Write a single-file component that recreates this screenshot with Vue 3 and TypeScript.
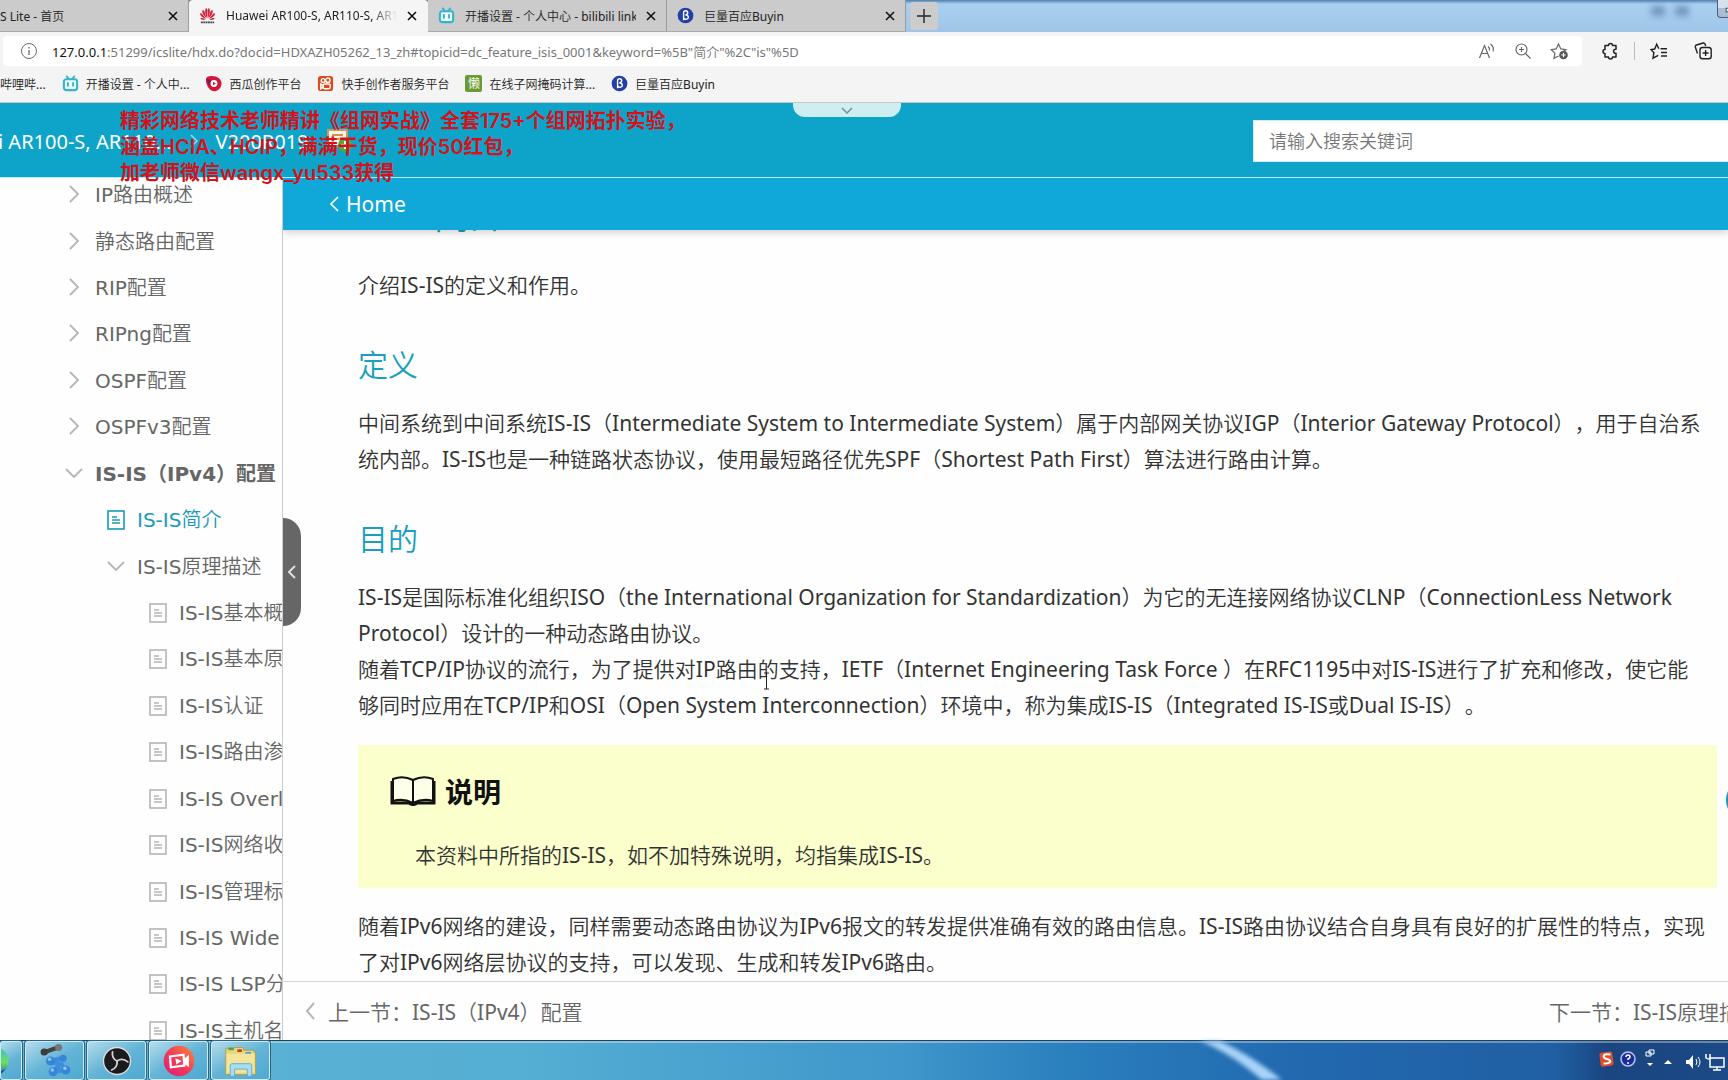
<script setup lang="ts">
interface TreeItem {
  label: string
  level: 1 | 2 | 3
  kind: 'closed' | 'open' | 'doc'
  bold?: boolean
  active?: boolean
}

interface Tab {
  title: string
  icon: string
  active?: boolean
}

const tabs: Tab[] = [
  { title: 'S Lite - 首页', icon: '' },
  { title: 'Huawei AR100-S, AR110-S, AR120-S', icon: 'huawei', active: true },
  { title: '开播设置 - 个人中心 - bilibili link', icon: 'bili' },
  { title: '巨量百应Buyin', icon: 'buyin' },
]

const bookmarks = [
  { title: '哔哩哔...', icon: '' },
  { title: '开播设置 - 个人中...', icon: 'bili' },
  { title: '西瓜创作平台', icon: 'xigua' },
  { title: '快手创作者服务平台', icon: 'kuaishou' },
  { title: '在线子网掩码计算...', icon: 'lan' },
  { title: '巨量百应Buyin', icon: 'buyin' },
]

const tree: TreeItem[] = [
  { label: 'IP路由概述', level: 1, kind: 'closed' },
  { label: '静态路由配置', level: 1, kind: 'closed' },
  { label: 'RIP配置', level: 1, kind: 'closed' },
  { label: 'RIPng配置', level: 1, kind: 'closed' },
  { label: 'OSPF配置', level: 1, kind: 'closed' },
  { label: 'OSPFv3配置', level: 1, kind: 'closed' },
  { label: 'IS-IS（IPv4）配置', level: 1, kind: 'open', bold: true },
  { label: 'IS-IS简介', level: 2, kind: 'doc', active: true },
  { label: 'IS-IS原理描述', level: 2, kind: 'open' },
  { label: 'IS-IS基本概念', level: 3, kind: 'doc' },
  { label: 'IS-IS基本原理', level: 3, kind: 'doc' },
  { label: 'IS-IS认证', level: 3, kind: 'doc' },
  { label: 'IS-IS路由渗透', level: 3, kind: 'doc' },
  { label: 'IS-IS Overload', level: 3, kind: 'doc' },
  { label: 'IS-IS网络收敛', level: 3, kind: 'doc' },
  { label: 'IS-IS管理标记', level: 3, kind: 'doc' },
  { label: 'IS-IS Wide Metric', level: 3, kind: 'doc' },
  { label: 'IS-IS LSP分片扩展', level: 3, kind: 'doc' },
  { label: 'IS-IS主机名映射', level: 3, kind: 'doc' },
]
</script>

<template>
  <div class="screen">
    <svg class="defs" aria-hidden="true">
      <symbol id="ic-huawei" viewBox="0 0 18 18">
        <g fill="#d3203c">
          <path d="M8.700 12C6.500 8 6 4 7 1.500c1.200-.4 1.800.5 1.800 2z" />
          <path d="M9.300 12c2.200-4 2.700-8 1.700-10.500-1.200-.4-1.800.5-1.800 2z" />
          <path d="M8 12C5 9.500 3.300 6.500 3.400 3.800c1-.8 2-.1 2.500 1.200z" />
          <path d="M10 12c3-2.500 4.700-5.500 4.600-8.200-1-.8-2-.1-2.500 1.200z" />
          <path d="M7.400 12.500C4 11.500 1.300 9.500.8 7.200c.6-.9 1.700-.7 2.500.2z" />
          <path d="M10.600 12.500c3.400-1 6.100-3 6.600-5.300-.6-.9-1.700-.7-2.500.2z" />
          <path d="M7 13.300c-2.300.7-4.500.4-5.600-1.300.7-.5 2.500-.2 5.600 1.300zM11 13.300c2.300.7 4.500.4 5.600-1.300-.7-.5-2.500-.2-5.600 1.300z" />
        </g>
        <path d="M2 16.300h14" stroke="#444" stroke-width="2" stroke-dasharray="2 .5" />
      </symbol>
      <symbol id="ic-bili" viewBox="0 0 18 18">
        <path d="M5 1.500l2 2.500M13 1.500L11 4" stroke="#35b4cc" stroke-width="2" stroke-linecap="round" />
        <rect x="2" y="4.500" width="14" height="11.500" rx="2.500" fill="#e9fbfd" stroke="#35b4cc" stroke-width="2.200" />
        <path d="M6.300 8.500v3M11.700 8.500v3" stroke="#35b4cc" stroke-width="2" stroke-linecap="round" />
      </symbol>
      <symbol id="ic-buyin" viewBox="0 0 18 18">
        <circle cx="9" cy="9" r="8.300" fill="#243ea8" />
        <path d="M7 14V5.500C7 3.500 11.300 3.300 11.300 6c0 1.500-1.300 2.200-2.500 2.300 1.800 0 3.200.9 3.200 2.500 0 2.300-3 2.600-4.500 1.500" fill="none" stroke="#fff" stroke-width="1.500" />
      </symbol>
      <symbol id="ic-xigua" viewBox="0 0 18 18">
        <path d="M1 5c0-2 1.300-3.600 4-3.700C12 .5 17.500 4 17.500 9S13 17.500 9.500 17.300C4 16.500 1 10 1 5z" fill="#d2183a" />
        <path d="M1.500 4L7 6 4 12z" fill="#8d1640" />
        <circle cx="9.500" cy="9" r="3.600" fill="#fff" />
        <path d="M8.500 7.200l3 1.800-3 1.800z" fill="#d2183a" />
      </symbol>
      <symbol id="ic-kuaishou" viewBox="0 0 18 18">
        <rect x="1" y="1" width="16" height="16" rx="3" fill="#df4a1d" />
        <g fill="none" stroke="#fff" stroke-width="1.500">
          <circle cx="6.500" cy="5.800" r="2" />
          <circle cx="11.500" cy="5.500" r="2.300" />
          <rect x="6.500" y="9.500" width="7.500" height="5" rx="1.500" />
          <path d="M4 9.500v5l2.500-1.500v-2z" />
        </g>
      </symbol>
    </svg>

    <nav class="tabs" aria-label="标签页">
      <div v-for="(t, i) in tabs" :key="i" class="tab" :class="{ on: t.active, first: !t.icon }">
        <svg v-if="t.icon" class="fav" aria-hidden="true"><use :href="'#ic-' + t.icon" /></svg>
        <span class="tab-title">{{ t.title }}</span>
        <button class="close" aria-label="关闭">
          <svg viewBox="0 0 10 10"><path d="M1 1l8 8M9 1L1 9" stroke="#111" stroke-width="1.600" /></svg>
        </button>
      </div>
      <button class="new-tab" aria-label="新建标签页">
        <svg viewBox="0 0 14 14"><path d="M7 0v14M0 7h14" stroke="#222" stroke-width="1.400" /></svg>
      </button>
      <div class="glass">
        <span class="smudge"></span>
        <span class="smudge"></span>
        <span class="win-btn"><svg viewBox="0 0 11 17"><rect x="9" y="9" width="6" height="4" fill="#fff" stroke="#33475e" /></svg></span>
      </div>
    </nav>

    <div class="address">
      <div class="field">
        <svg class="ic18" viewBox="0 0 18 18" fill="none" stroke="#6b6b6b">
          <circle cx="9" cy="9" r="7.500" /><path d="M9 8v5M9 5v1.500" stroke-width="1.300" />
        </svg>
        <p class="url"><b>127.0.0.1</b>:51299/icslite/hdx.do?docid=HDXAZH05262_13_zh#topicid=dc_feature_isis_0001&amp;keyword=%5B"简介"%2C"is"%5D</p>
        <svg class="ic18" viewBox="0 0 18 18" fill="none" stroke="#666" stroke-width="1.200">
          <path d="M1.500 16L6.500 3.500 11.500 16M3.300 11.500h6.400" /><path d="M10 4.500q2 1.500 1.500 4M12.500 2q4 3 2.500 7.500" />
        </svg>
        <svg class="ic18" viewBox="0 0 18 18" fill="none" stroke="#666" stroke-width="1.200">
          <circle cx="7.500" cy="7.500" r="5.500" /><path d="M11.500 11.500l5 5M7.500 5v5M5 7.500h5" />
        </svg>
        <svg class="ic18" viewBox="0 0 18 18" fill="none" stroke="#666" stroke-width="1.200">
          <path d="M8.500 14L4 16.300l.9-5.100L1.200 7.600l5-.7L8.500 2l2.300 4.900 5 .7-1.800 1.700" />
          <circle cx="13.500" cy="13" r="4.300" fill="#555" stroke="none" /><path d="M13.500 10.700v4.600M11.200 13h4.600" stroke="#fff" />
        </svg>
      </div>
      <div class="tools">
        <svg class="ic18" viewBox="0 0 18 18" fill="none" stroke="#222" stroke-width="1.500">
          <path d="M4 3.500h3.500a2 2 0 0 1 4 0H15v3.800a2 2 0 1 0 0 3.900V15h-3.500a2 2 0 0 1-4 0H4v-3.500a2 2 0 0 1 0-4z" stroke-linejoin="round" />
        </svg>
        <i class="bar"></i>
        <svg class="ic18" viewBox="0 0 18 18" fill="none" stroke="#222" stroke-width="1.400">
          <path d="M10.500 6.800H17M11 10.500h6M11 14h6M8.800 6.800L6.700 2.300 4.700 7 .9 7.500l3 3.200-.9 5.500 5.200-2.800" />
        </svg>
        <svg class="ic18" viewBox="0 0 18 18" fill="none" stroke="#222" stroke-width="1.400">
          <path d="M3.500 11.500L1.300 5q-.3-1.500 1.200-2l6.500-2q1.500-.3 2 1l.7 2" />
          <rect x="6" y="5.500" width="11.200" height="11.200" rx="2.500" /><path d="M11.600 8v6M8.600 11h6" />
        </svg>
      </div>
    </div>

    <nav class="bookmarks" aria-label="收藏夹">
      <a v-for="(b, i) in bookmarks" :key="i" href="#">
        <svg v-if="b.icon && b.icon !== 'lan'" class="fav" aria-hidden="true"><use :href="'#ic-' + b.icon" /></svg>
        <span v-if="b.icon === 'lan'" class="lan">懒</span>
        <span>{{ b.title }}</span>
      </a>
    </nav>

    <header class="site">
      <div class="crumbs">
        <span>i AR100-S, AR110...</span>
        <svg class="sep" viewBox="0 0 8 14"><path d="M1 1l6 6-6 6" fill="none" stroke="#8fdbee" stroke-width="1.500" /></svg>
        <span>V200R019</span>
        <svg class="pic" viewBox="0 0 26 24">
          <rect x="1" y="1" width="19" height="16" fill="#f8f3e4" stroke="#c99a62" stroke-width="2" />
          <path d="M5 6h11M5 10h7" stroke="#d98d4c" stroke-width="2" />
          <circle cx="18" cy="16" r="7" fill="#57a83c" /><path d="M18 12v8M14 16h8" stroke="#fff" stroke-width="2" />
        </svg>
      </div>
      <input class="search" type="search" aria-label="搜索" placeholder="请输入搜索关键词" />
      <button class="pull" aria-label="展开">
        <svg viewBox="0 0 12 7"><path d="M1 1l5 5 5-5" fill="none" stroke="#7c9297" stroke-width="1.600" /></svg>
      </button>
      <p class="promo">精彩网络技术老师精讲《组网实战》全套175+个组网拓扑实验，<br />涵盖HCIA、HCIP，满满干货，现价50红包，<br />加老师微信wangx_yu533获得</p>
    </header>

    <div class="work">
      <aside>
        <ul class="tree">
          <li v-for="item in tree" :key="item.label" :class="['l' + item.level, { bold: item.bold, active: item.active }]">
            <svg v-if="item.kind === 'doc'" class="doc" viewBox="0 0 18 20" fill="none" stroke="currentColor">
              <rect x="1" y="1" width="16" height="18" stroke-width="1.600" />
              <path d="M5 7h5M5 10h8M5 13h8" stroke-width="1.300" />
            </svg>
            <svg v-else class="doc" viewBox="0 0 18 20" fill="none" stroke="currentColor" stroke-width="1.800">
              <path :d="item.kind === 'open' ? 'M1 5l8 8 8-8' : 'M5 1l8 8-8 8'" />
            </svg>
            <a href="#">{{ item.label }}</a>
          </li>
        </ul>
      </aside>

      <main>
        <div class="homebar">
          <svg viewBox="0 0 10 16"><path d="M9 1L2 8l7 7" fill="none" stroke="#fff" stroke-width="1.700" /></svg>
          <a href="#">Home</a>
        </div>
        <article>
          <h1>IS-IS简介</h1>
          <p class="lead">介绍IS-IS的定义和作用。</p>
          <h2>定义</h2>
          <p>中间系统到中间系统IS-IS（Intermediate System to Intermediate System）属于内部网关协议IGP（Interior Gateway Protocol），用于自治系<br />统内部。IS-IS也是一种链路状态协议，使用最短路径优先SPF（Shortest Path First）算法进行路由计算。</p>
          <h2>目的</h2>
          <p>IS-IS是国际标准化组织ISO（the International Organization for Standardization）为它的无连接网络协议CLNP（ConnectionLess Network<br />Protocol）设计的一种动态路由协议。<br />随着TCP/IP协议的流行，为了提供对IP路由的支持，IETF（Internet Engineering Task Force ）在RFC1195中对IS-IS进行了扩充和修改，使它能<br />够同时应用在TCP/IP和OSI（Open System Interconnection）环境中，称为集成IS-IS（Integrated IS-IS或Dual IS-IS）。</p>
          <section class="note">
            <h3>
              <svg viewBox="0 0 46 30">
                <path d="M3 3Q13-1 23 4 33-1 43 3V25Q33 22 23 27 13 22 3 25z" fill="#fdffe8" stroke="#111" stroke-width="2" />
                <path d="M2 5v22h17q4 3 8 0h17V5" fill="none" stroke="#111" stroke-width="3" />
                <path d="M23 4v23" stroke="#111" stroke-width="2" />
              </svg>
              说明
            </h3>
            <p>本资料中所指的IS-IS，如不加特殊说明，均指集成IS-IS。</p>
          </section>
          <p>随着IPv6网络的建设，同样需要动态路由协议为IPv6报文的转发提供准确有效的路由信息。IS-IS路由协议结合自身具有良好的扩展性的特点，实现<br />了对IPv6网络层协议的支持，可以发现、生成和转发IPv6路由。</p>
        </article>
        <footer>
          <svg viewBox="0 0 10 18"><path d="M9 1L2 9l7 8" fill="none" stroke="#b5b5b5" stroke-width="2" /></svg>
          <a href="#">上一节：IS-IS（IPv4）配置</a>
          <a href="#" class="next">下一节：IS-IS原理描述</a>
        </footer>
        <button class="collapse" aria-label="收起目录">
          <svg viewBox="0 0 8 14"><path d="M7 1L1 7l6 6" fill="none" stroke="#ddd" stroke-width="2" /></svg>
        </button>
        <span class="bubble"></span>
        <svg class="ibeam" viewBox="0 0 7 18"><path d="M1 1h5M3.500 1v16M1 17h5" stroke="#222" fill="none" /></svg>
      </main>
    </div>

    <div class="taskbar">
      <svg class="streak" viewBox="0 0 120 40" preserveAspectRatio="none">
        <path d="M10 0H30Q60 14 92 40H72Q40 12 10 0z" fill="#a9d3f8" />
      </svg>
      <button class="task edge" aria-label="浏览器">
        <svg viewBox="0 0 40 40">
          <defs><linearGradient id="eg" x1="0" y1="0" x2="0" y2="1"><stop offset="0" stop-color="#35c3c0" /><stop offset=".55" stop-color="#6fe05c" /><stop offset="1" stop-color="#1f6fc0" /></linearGradient></defs>
          <circle cx="20" cy="20" r="15" fill="url(#eg)" /><path d="M8 29q14 8 24-1-5 9-14 8-6-1-10-7z" fill="#134a94" />
        </svg>
      </button>
      <button class="task" aria-label="eNSP">
        <svg viewBox="0 0 40 40">
          <g stroke-linecap="round">
            <path d="M9 10l14-5" stroke="#444" stroke-width="5" /><circle cx="8" cy="10" r="4" fill="#3b3b3b" /><circle cx="24" cy="5" r="4" fill="#777" />
            <path d="M15 20l13-3M16 21l12 3M27 24l-9 7M18 32l13-2" stroke="#3f8edb" stroke-width="5" />
            <g fill="#3586d8"><circle cx="15" cy="20" r="5" /><circle cx="29" cy="17" r="4" /><circle cx="18" cy="32" r="5" /><circle cx="32" cy="30" r="5" /></g>
            <g fill="#8cc3f4"><circle cx="14" cy="18" r="2" /><circle cx="17" cy="30" r="2" /><circle cx="31" cy="28" r="2" /></g>
          </g>
        </svg>
      </button>
      <button class="task" aria-label="OBS">
        <svg viewBox="0 0 40 40">
          <circle cx="20" cy="20" r="15" fill="#1c1a1d" stroke="#dcdfe3" stroke-width="1.500" />
          <g fill="none" stroke="#d3d3d6" stroke-width="2" stroke-linecap="round">
            <path d="M20 20Q14 17 15 10" /><path d="M20 20q6-4 12 1" /><path d="M20 20q1 7-6 10" />
          </g>
        </svg>
      </button>
      <button class="task" aria-label="录屏">
        <svg viewBox="0 0 40 40">
          <defs><linearGradient id="rg" x1="0" y1="1" x2="1" y2="0"><stop offset="0" stop-color="#e0187c" /><stop offset=".5" stop-color="#f03e58" /><stop offset="1" stop-color="#fb8a3c" /></linearGradient></defs>
          <circle cx="20" cy="20" r="17" fill="url(#rg)" />
          <path d="M10 15l15-2 1 12-15 2z" fill="none" stroke="#fff" stroke-width="2.500" /><path d="M16 17l7 3-6 4zM25 18l6-5v14l-5-4z" fill="#fff" />
        </svg>
      </button>
      <button class="task" aria-label="资源管理器">
        <svg viewBox="0 0 40 40">
          <path d="M3 6h9l1-1h9l1 3h10l3 3v24H3z" fill="#e9d67c" stroke="#b59d48" />
          <path d="M6 5h6v3H6z" fill="#4ca846" /><path d="M16 7h5v3h-5z" fill="#b8452b" /><path d="M25 10h6v3h-6z" fill="#4aa3d8" />
          <path d="M4 12h31v21H4z" fill="#f3e59a" />
          <path d="M8 37V25q0-2 2-2h20q2 0 2 2v12h-5v-8H13v8z" fill="#a7dcf1" stroke="#5fa9cf" />
        </svg>
      </button>
      <div class="tray">
        <svg viewBox="0 0 133 40">
          <g transform="rotate(-8 12 18)"><rect x="5" y="11" width="13" height="14" rx="2" fill="#dc4f2c" /><path d="M16 14q-7-2-7 1 0 2 3 3 3 1 3 3-1 2-7 1" fill="none" stroke="#fff" stroke-width="2" /></g>
          <circle cx="33" cy="18" r="7" fill="#1b2a9c" stroke="#b9c7ee" stroke-width="1.500" />
          <path d="M31 16q0-2 2-2t2 2q0 1-2 2v1M33 21v2" stroke="#fff" stroke-width="1.500" fill="none" />
          <path d="M54 9h5v4h-5zM51 11h5v4h-5z" fill="#1b4a86" stroke="#fff" />
          <path d="M52 22h6l-3 3zM69 23h8l-4-4z" fill="#fff" />
          <path d="M91 19h3l4-5v14l-4-5h-3z" fill="#fff" /><path d="M101 18q2 3 0 6M103 16q4 5 0 10" fill="none" stroke="#fff" />
          <path d="M115 17h14v9h-14zM118 29h8M122 26v3" stroke="#fff" stroke-width="1.500" fill="#1b4a86" /><path d="M111 13v4q3 2 4 0v-4" fill="none" stroke="#fff" stroke-width="1.500" />
        </svg>
      </div>
    </div>
  </div>
</template>

<style>
html,
body {
  margin: 0;
  overflow: hidden;
}
</style>

<style scoped>
.screen {
  --cjk: 'Noto Sans CJK SC DemiLight', 'Noto Sans CJK SC Light', 'Noto Sans CJK SC';
  display: flex;
  flex-direction: column;
  height: 100vh;
  overflow: hidden;
  background: #fdfefd;
  font-family: 'Noto Sans', var(--cjk), sans-serif;
  font-size: 12px;
  color: #222;
  white-space: nowrap;
  text-spacing-trim: space-all;
}
.defs {
  position: absolute;
  width: 0;
  height: 0;
}
p,
h1,
h2,
h3,
ul {
  margin: 0;
  padding: 0;
  font-weight: inherit;
}
a {
  color: inherit;
  text-decoration: none;
}
button {
  border: 0;
  padding: 0;
  background: none;
}

.tabs {
  flex: none;
  display: flex;
  height: 32px;
  background: linear-gradient(#4f7fae, #a9cff0 4px, #9fc5e8);
}
.tab {
  flex: none;
  display: flex;
  align-items: center;
  width: 239px;
  box-sizing: border-box;
  padding: 0 10px;
  gap: 10px;
  background: #cbcbcb;
  border-bottom: 1px solid #aaa;
  border-right: 1px solid #9c9c9c;
}
.tab.first {
  width: 189px;
  padding-left: 0;
}
.tab.on {
  background: #f5f5f5;
  border-color: #f5f5f5;
  border-radius: 4px 4px 0 0;
}
.tab-title {
  flex: 1;
  overflow: hidden;
}
.tab.on .tab-title {
  mask-image: linear-gradient(90deg, #000 85%, transparent);
}
.fav {
  flex: none;
  width: 17px;
  height: 17px;
}
.close {
  display: flex;
}
.close svg {
  width: 10px;
  height: 10px;
}
.new-tab {
  display: grid;
  place-items: center;
  width: 28px;
  margin: 2px 4px;
  background: #ccc;
  border-radius: 3px;
}
.new-tab svg {
  width: 14px;
  height: 14px;
}
.glass {
  flex: 1;
  display: flex;
  gap: 10px;
  justify-content: flex-end;
  align-items: flex-start;
}
.smudge {
  width: 14px;
  height: 10px;
  margin-top: 6px;
  background: #4f76a0;
  opacity: 0.6;
  filter: blur(3px);
}
.win-btn {
  width: 10px;
  height: 17px;
  margin-left: 18px;
  overflow: hidden;
  background: linear-gradient(#d7e2ee 50%, #a9bdd3 50%);
  border: 1px solid #4a5f78;
  border-width: 0 0 1px 1px;
  border-radius: 0 0 0 4px;
}

.address {
  flex: none;
  display: flex;
  align-items: center;
  height: 38px;
  background: #f4f4f4;
}
.field {
  flex: 1;
  display: flex;
  align-items: center;
  height: 30px;
  margin-left: 3px;
  padding: 0 14px 0 17px;
  gap: 18px;
  background: #fff;
  border-radius: 4px;
}
.ic18 {
  flex: none;
  width: 18px;
  height: 18px;
}
.url {
  flex: 1;
  margin-left: -4px;
  font-size: 13px;
  color: #777;
}
.url b {
  font-weight: 400;
  color: #111;
}
.tools {
  display: flex;
  align-items: center;
  gap: 15px;
  padding: 0 16px 0 19px;
}
.tools .ic18:last-child {
  margin-left: 11px;
}
.bar {
  width: 1px;
  height: 18px;
  background: #bbb;
}

.bookmarks {
  flex: none;
  display: flex;
  align-items: center;
  gap: 16px;
  height: 27px;
  padding: 0 0 5px;
  background: #f4f4f4;
  border-bottom: 1px solid #c6c6c6;
}
.bookmarks a {
  display: flex;
  align-items: center;
  gap: 7px;
}
.lan {
  width: 17px;
  background: #6a9b33;
  border-radius: 2px;
  color: #fff;
  line-height: 17px;
  text-align: center;
}

.site {
  flex: none;
  position: relative;
  display: flex;
  align-items: center;
  justify-content: space-between;
  box-sizing: border-box;
  height: 75px;
  padding-top: 2px;
  background: #0ea4c9;
  border-bottom: 1px solid #b4eaf4;
}
.crumbs {
  display: flex;
  align-items: center;
  gap: 18px;
  margin-left: -2px;
  font-size: 20px;
  color: #fff;
}
.sep {
  width: 8px;
  height: 14px;
}
.pic {
  width: 26px;
  height: 24px;
}
.search {
  box-sizing: border-box;
  width: 475px;
  height: 42px;
  padding: 0 15px;
  border: 1px solid #cdeff5;
  border-right: 0;
  background: #fff;
  font: inherit;
  font-size: 18px;
}
.search::placeholder {
  color: #777;
}
.pull {
  position: absolute;
  left: 793px;
  top: 0;
  display: grid;
  place-items: center;
  width: 108px;
  height: 14px;
  background: #cfeef2;
  border-radius: 0 0 12px 12px;
}
.pull svg {
  width: 12px;
  height: 7px;
}
.promo {
  position: absolute;
  z-index: 3;
  left: 120px;
  top: 5px;
  font: 600 20px/26px Inter, 'Noto Sans CJK SC', sans-serif;
  color: #d3121b;
}

.work {
  flex: 1;
  display: flex;
  min-height: 0;
}
aside {
  flex: none;
  width: 282px;
  overflow: hidden;
  border-right: 1px solid #ccc;
  font: 20px/28px 'DejaVu Sans', var(--cjk), sans-serif;
  color: #666;
}
.tree {
  display: grid;
  grid-auto-rows: 1fr;
  height: calc(100% + 20px);
  margin-top: -6px;
  list-style: none;
}
.tree li {
  display: flex;
  align-items: center;
  gap: 12px;
}
.tree .l1 {
  padding-left: 65px;
}
.tree .l2 {
  padding-left: 107px;
}
.tree .l3 {
  padding-left: 149px;
}
.tree .bold {
  font-family: 'DejaVu Sans', 'Noto Sans CJK SC', sans-serif;
  font-weight: 700;
}
.tree .active,
.tree .active .doc {
  color: #1a9bb6;
}
.doc {
  flex: none;
  width: 18px;
  height: 20px;
  color: #b5b5b5;
}

main {
  flex: 1;
  position: relative;
  display: flex;
  flex-direction: column;
  min-width: 0;
  overflow: hidden;
  font-size: 21px;
}
.homebar {
  flex: none;
  z-index: 1;
  display: flex;
  align-items: center;
  gap: 7px;
  height: 52px;
  padding-left: 46px;
  background: #0fa8d8;
  box-shadow: 0 2px 8px #0003;
  color: #fff;
}
.homebar svg {
  width: 10px;
  height: 16px;
}
article {
  flex: 1;
  min-height: 0;
  overflow: hidden;
  padding: 0 11px 0 75px;
  line-height: 36px;
  color: #333;
}
h1 {
  margin-top: -36px;
  font-size: 36px;
  line-height: 44px;
  color: #1a9fc0;
}
.lead {
  margin-top: 29px;
}
h2 {
  margin: 40px 0 18px;
  font-size: 30px;
  line-height: 44px;
  color: #1a9fc0;
}
h2 + p {
  margin-bottom: 22px;
}
h2:nth-of-type(2) {
  margin-top: 40px;
}
.note {
  box-sizing: border-box;
  height: 143px;
  margin-bottom: 20px;
  padding: 26px 32px 0;
  background: #fbffcc;
}
.note h3 {
  display: flex;
  align-items: center;
  gap: 9px;
  font-family: 'Noto Sans CJK SC', sans-serif;
  font-size: 28px;
  line-height: 40px;
  font-weight: 700;
  color: #111;
}
.note svg {
  width: 46px;
  height: 30px;
}
.note p {
  margin: 26px 0 0 25px;
}
footer {
  flex: none;
  display: flex;
  align-items: center;
  height: 58px;
  padding-left: 22px;
  gap: 13px;
  border-top: 1px solid #d5d5d5;
  color: #666;
}
footer svg {
  width: 10px;
  height: 18px;
}
.next {
  margin-left: auto;
  margin-right: -33px;
}
.collapse {
  position: absolute;
  left: 0;
  top: 340px;
  display: grid;
  place-items: center;
  width: 18px;
  height: 108px;
  background: #666;
  border-radius: 0 18px 18px 0;
}
.collapse svg {
  width: 8px;
  height: 14px;
}
.bubble {
  position: absolute;
  right: -38px;
  top: 602px;
  width: 40px;
  height: 40px;
  border-radius: 50%;
  background: #1b93b5;
}
.ibeam {
  position: absolute;
  left: 480px;
  top: 494px;
  width: 7px;
  height: 18px;
}

.taskbar {
  flex: none;
  position: relative;
  display: flex;
  align-items: stretch;
  gap: 3px;
  height: 40px;
  box-sizing: border-box;
  border-top: 1px solid #1f4257;
  background: linear-gradient(90deg, #5db4d6 0%, #55aed3 30%, #3f97cb 52%, #2a7fbd 62%, #2269b0 75%, #205fa3 90%, #1a4580 93%, #1b4a86 100%);
  box-shadow: inset 0 2px 0 #ffffff55;
}
.streak {
  position: absolute;
  left: 1190px;
  top: 0;
  width: 120px;
  height: 39px;
  filter: blur(2px);
}
.task {
  display: grid;
  place-items: center;
  width: 59px;
  box-sizing: border-box;
  border: 1px solid #cdeaf6;
  border-radius: 3px;
  background: linear-gradient(150deg, #b4dcec, #64b4d6 50%, #4fa9d2);
  box-shadow: 0 0 0 1px #2b6585;
}
.task svg {
  width: 36px;
  height: 36px;
}
.task.edge {
  justify-content: end;
  width: 22px;
  overflow: hidden;
}
.task.edge svg {
  margin-right: 8px;
}
.tray {
  display: flex;
  margin-left: auto;
  overflow: hidden;
}
.tray svg {
  width: 133px;
  height: 40px;
}
</style>
